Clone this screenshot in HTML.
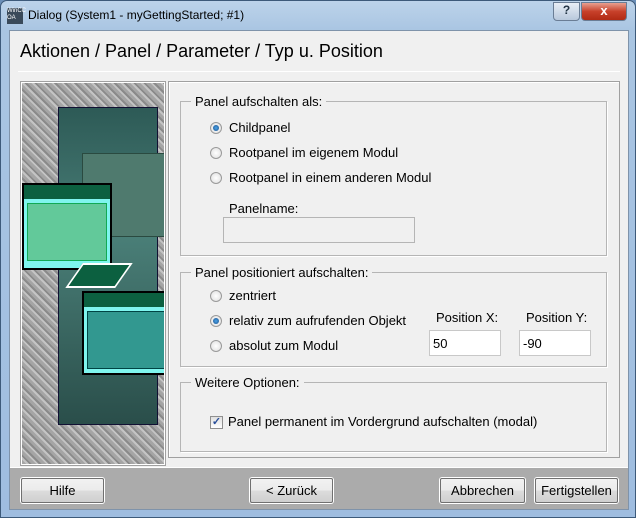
<!DOCTYPE html>
<html><head><meta charset="utf-8"><style>
*{box-sizing:border-box;margin:0;padding:0}
body{width:636px;height:518px;overflow:hidden;font-family:"Liberation Sans",sans-serif;font-size:12px;color:#000;background:#6b8fb8}
.win{position:absolute;left:0;top:0;width:636px;height:518px;border-radius:7px 7px 0 0;background:linear-gradient(180deg,#bcd3ea 0,#a9c5e2 30px,#9fbde0 100%);border:1px solid #3d5a7a}
.title{position:absolute;left:27px;top:7px;font-size:12px;color:#000}
.client{position:absolute;left:8px;top:29px;width:620px;height:480px;background:#f0f0f0;border:1px solid #7f93aa}
.h1{position:absolute;left:10px;top:10px;font-size:18px}
.sep{position:absolute;left:8px;top:40px;width:602px;height:1px;background:#a0a0a0;border-bottom:1px solid #fff}
.img{position:absolute;left:11px;top:51px;width:144px;height:383px;border:1px solid #fff;outline:1px solid #a0a0a0;background:repeating-linear-gradient(45deg,#a5a5a5 0 3px,#c4c4c4 3px 5px,#8a8a8a 5px 7px);overflow:hidden}
.rp{position:absolute;left:158px;top:50px;width:452px;height:377px;border:1px solid #a0a0a0;box-shadow:inset 1px 1px #fff}
.grp{position:absolute;border:1px solid #b5b5b5;box-shadow:1px 1px #fff}
.grp .lg{position:absolute;left:10px;top:-8px;background:#f0f0f0;padding:0 4px;font-size:13px}
.r{position:absolute;font-size:13px;white-space:nowrap}
.rad{position:absolute;width:12px;height:12px;border-radius:50%;border:1px solid #9a9a9a;background:radial-gradient(#fff,#ddd)}
.rad.on::after{content:"";position:absolute;left:2px;top:2px;width:6px;height:6px;border-radius:50%;background:radial-gradient(#4aa3e8,#1b4f8a)}
.inp{position:absolute;background:#fff;border:1px solid #c8c8c8;font-size:13px;padding:5px 3px}
.bar{position:absolute;left:0;top:436px;width:618px;height:42px;background:#ababab;border-top:1px solid #fff}
.btn{position:absolute;top:10px;height:25px;border:1px solid #707070;box-shadow:0 0 0 1px #fff;border-radius:2px;background:linear-gradient(#f2f2f2 0,#ebebeb 50%,#dcdcdc 51%,#cfcfcf 100%);font-size:13px;text-align:center;line-height:23px}
.tb{position:absolute;top:1px;height:19px;border:1px solid #6a7d95;border-radius:0 0 4px 4px}
.w{position:absolute;border:2px solid #000;background:#7ff5ee}
.w .t{height:14px;background:#0c6040}
</style></head><body>
<div class="win">
<div style="position:absolute;left:6px;top:7px;width:16px;height:16px;background:#3a4a5a;color:#fff;font-size:6px;line-height:7px">WinCC OA</div>
<div class="title">Dialog (System1 - myGettingStarted; #1)</div>
<div class="tb" style="left:552px;width:27px;background:linear-gradient(#e8eef6,#b8c8dc);text-align:center;color:#234;font-size:12px;font-weight:bold">?</div>
<div class="tb" style="left:580px;width:46px;background:linear-gradient(#e8a090,#c7402a 50%,#b02a14);text-align:center;color:#fff;font-weight:bold;font-size:13px">x</div>
<div class="client">
<div class="h1">Aktionen / Panel / Parameter / Typ u. Position</div>
<div class="sep"></div>
<div class="img">
 <div style="position:absolute;left:36px;top:24px;width:100px;height:318px;background:linear-gradient(#2d5a56,#4a7f78 40%,#2a4e4a);border:1px solid #113"></div>
 <div style="position:absolute;left:60px;top:70px;width:88px;height:84px;background:#4f7a6e;border:1px solid #2a4a40"></div>
 <div class="w" style="left:0;top:100px;width:90px;height:87px"><div class="t"></div><div style="margin:4px 3px;height:58px;background:#62c99a;border:1px solid #1a5"></div></div>
 <div style="position:absolute;left:52px;top:180px;width:50px;height:25px;background:#0c6040;transform:skewX(-35deg);border:2px solid #fff"></div>
 <div class="w" style="left:60px;top:208px;width:90px;height:84px"><div class="t"></div><div style="margin:4px 3px;height:58px;background:#329890;border:1px solid #044"></div></div>
</div>
<div class="rp">
 <div class="grp" style="left:11px;top:19px;width:427px;height:155px"><span class="lg">Panel aufschalten als:</span>
  <div class="rad on" style="left:29px;top:20px"></div><div class="r" style="left:48px;top:18px">Childpanel</div>
  <div class="rad" style="left:29px;top:45px"></div><div class="r" style="left:48px;top:43px">Rootpanel im eigenem Modul</div>
  <div class="rad" style="left:29px;top:70px"></div><div class="r" style="left:48px;top:68px">Rootpanel in einem anderen Modul</div>
  <div class="r" style="left:48px;top:99px">Panelname:</div>
  <div class="inp" style="left:42px;top:115px;width:192px;height:26px;background:#f0f0f0;border-color:#b5b5b5"></div>
 </div>
 <div class="grp" style="left:11px;top:190px;width:427px;height:95px"><span class="lg">Panel positioniert aufschalten:</span>
  <div class="rad" style="left:29px;top:17px"></div><div class="r" style="left:48px;top:15px">zentriert</div>
  <div class="rad on" style="left:29px;top:42px"></div><div class="r" style="left:48px;top:40px">relativ zum aufrufenden Objekt</div>
  <div class="rad" style="left:29px;top:67px"></div><div class="r" style="left:48px;top:65px">absolut zum Modul</div>
  <div class="r" style="left:255px;top:37px">Position X:</div>
  <div class="r" style="left:345px;top:37px">Position Y:</div>
  <div class="inp" style="left:248px;top:57px;width:72px;height:26px">50</div>
  <div class="inp" style="left:338px;top:57px;width:72px;height:26px">-90</div>
 </div>
 <div class="grp" style="left:11px;top:300px;width:427px;height:70px"><span class="lg">Weitere Optionen:</span>
  <div style="position:absolute;left:29px;top:33px;width:13px;height:13px;border:1px solid #8f8f8f;background:linear-gradient(#e0e0e0,#fff);color:#2a4f9a;font-size:11px;line-height:11px;text-align:center;font-weight:bold">✓</div>
  <div class="r" style="left:47px;top:31px">Panel permanent im Vordergrund aufschalten (modal)</div>
 </div>
</div>
<div class="bar">
 <div class="btn" style="left:11px;width:83px">Hilfe</div>
 <div class="btn" style="left:240px;width:83px">&lt; Zurück</div>
 <div class="btn" style="left:430px;width:85px">Abbrechen</div>
 <div class="btn" style="left:525px;width:83px">Fertigstellen</div>
</div>
</div>
</div>
</body></html>
